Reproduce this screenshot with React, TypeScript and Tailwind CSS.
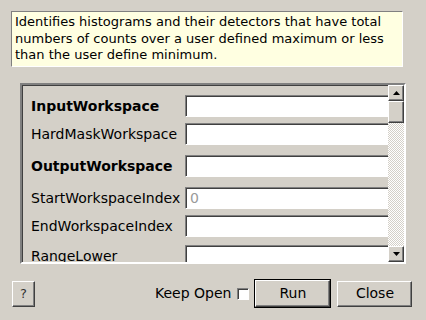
import React from 'react';

const rows = [
  { label: 'InputWorkspace', bold: true, gap: 'mt-[10px]' },
  { label: 'HardMaskWorkspace', bold: false, gap: 'mt-[6px]' },
  { label: 'OutputWorkspace', bold: true, gap: 'mt-[10px]' },
  { label: 'StartWorkspaceIndex', bold: false, gap: 'mt-[10px]', placeholder: '0' },
  { label: 'EndWorkspaceIndex', bold: false, gap: 'mt-[6px]' },
  { label: 'RangeLower', bold: false, gap: 'mt-[8px]' },
];

function ArrowButton({ down }: { down?: boolean }) {
  return (
    <div className="w-[16px] h-[16px] shrink-0 bg-[#d4d0c8] border border-t-white border-l-white border-r-[#404040] border-b-[#404040] shadow-[inset_-1px_-1px_0_#808080] flex items-center justify-center">
      <svg width="7" height="4" viewBox="0 0 7 4">
        {down ? <path d="M0 0h7L3.5 4z" fill="#000" /> : <path d="M0 4h7L3.5 0z" fill="#000" />}
      </svg>
    </div>
  );
}

export default function App() {
  return (
    <div className="w-[426px] h-[320px] bg-[#d4d0c8] font-['DejaVu_Sans',sans-serif] text-black overflow-hidden flex flex-col">
      {/* Description */}
      <div className="mt-[11px] ml-[11px] w-[392px] h-[56px] bg-[#ffffe1] border border-t-[#808080] border-l-[#808080] border-r-white border-b-white pl-[3px] pt-[2px] text-[13px] leading-[16.5px]">
        Identifies histograms and their detectors that have total numbers of counts over a user defined maximum or less than the user define minimum.
      </div>

      {/* Property list */}
      <div className="mt-[16px] ml-[20px] w-[386px] h-[181px] border-2 border-t-[#808080] border-l-[#808080] border-r-white border-b-white flex">
        <div className="flex-1 h-full overflow-hidden shadow-[inset_1px_1px_0_#404040] pl-[9px]">
          {rows.map((r) => (
            <div key={r.label} className={`${r.gap} h-[22px] flex items-center`}>
              <div className={`w-[154px] shrink-0 text-[14px] ${r.bold ? 'font-bold' : ''}`}>{r.label}</div>
              <div className="w-[220px] shrink-0 h-[22px] bg-white border border-t-[#808080] border-l-[#808080] border-r-white border-b-white shadow-[inset_1px_1px_0_#404040] pl-[4px] flex items-center text-[14px] text-[#9a9a9a]">
                {r.placeholder}
              </div>
            </div>
          ))}
        </div>
        <div className="w-[16px] h-full flex flex-col shrink-0">
          <ArrowButton />
          <div className="w-[16px] h-[22px] bg-[#d4d0c8] border border-t-white border-l-white border-r-[#404040] border-b-[#404040] shadow-[inset_-1px_-1px_0_#808080]" />
          <div className="flex-1 bg-[repeating-conic-gradient(#d4d0c8_0%_25%,#ffffff_0%_50%)] bg-[length:2px_2px]" />
          <ArrowButton down />
        </div>
      </div>

      {/* Buttons */}
      <div className="mt-[15px] flex items-center h-[29px] text-[14px]">
        <button className="ml-[12px] w-[23px] h-[26px] bg-[#d4d0c8] border border-t-white border-l-white border-r-[#404040] border-b-[#404040] shadow-[inset_-1px_-1px_0_#808080] text-[13px] text-[#333]">
          ?
        </button>
        <span className="ml-[120px]">Keep Open</span>
        <div className="ml-[6px] w-[12px] h-[12px] bg-white border border-t-[#808080] border-l-[#808080] border-r-white border-b-white shadow-[inset_1px_1px_0_#404040]" />
        <button className="ml-[5px] w-[77px] h-[29px] border border-black bg-[#d4d0c8]">
          <div className="w-full h-full border border-t-white border-l-white border-r-[#404040] border-b-[#404040] shadow-[inset_-1px_-1px_0_#808080] flex items-center justify-center">
            Run
          </div>
        </button>
        <button className="ml-[6px] w-[75px] h-[26px] bg-[#d4d0c8] border border-t-white border-l-white border-r-[#404040] border-b-[#404040] shadow-[inset_-1px_-1px_0_#808080]">
          Close
        </button>
      </div>
    </div>
  );
}
